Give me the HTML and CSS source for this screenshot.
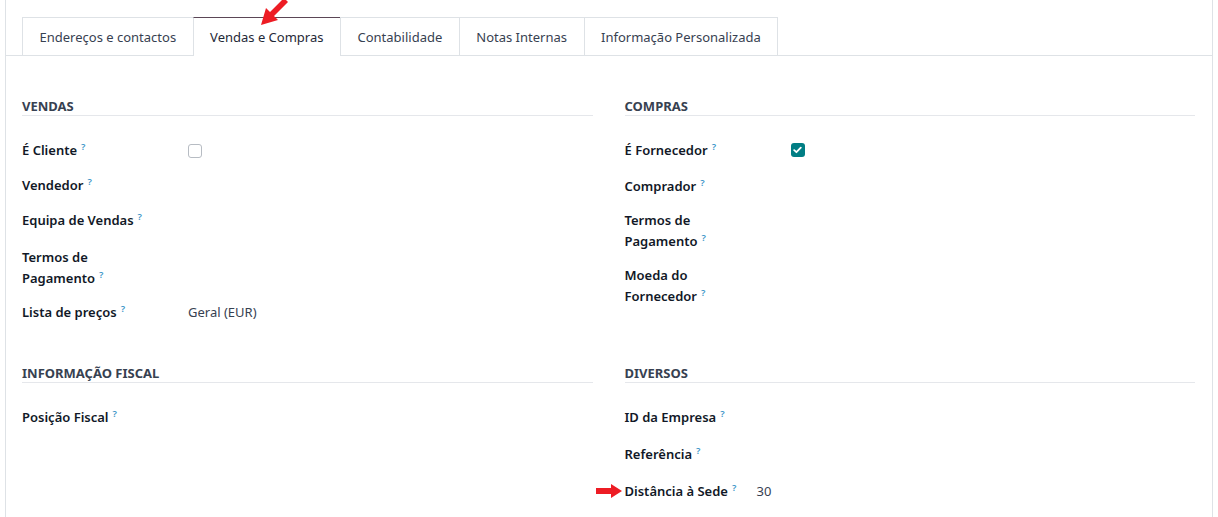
FILE: index.html
```html
<!DOCTYPE html>
<html>
  <head>
    <link rel="stylesheet" href="styles.css">
  </head>
  <body>
    <div class="sheet">
      <div class="tabs">
        <div class="tab">Endereços e contactos</div>
        <div class="tab active">Vendas e Compras</div>
        <div class="tab">Contabilidade</div>
        <div class="tab">Notas Internas</div>
        <div class="tab">Informação Personalizada</div>
      </div>
      <div class="groups">
        <div class="group sales">
          <div class="group-title">Vendas</div>
          <div class="row first"><div class="label">É Cliente<sup>?</sup></div><div class="value"><span class="checkbox"></span></div></div>
          <div class="row wide"><div class="label">Vendedor<sup>?</sup></div><div class="value"></div></div>
          <div class="row tall"><div class="label">Equipa de Vendas<sup>?</sup></div><div class="value"></div></div>
          <div class="row"><div class="label">Termos de Pagamento<sup>?</sup></div><div class="value"></div></div>
          <div class="row"><div class="label">Lista de preços<sup>?</sup></div><div class="value">Geral (EUR)</div></div>
        </div>
        <div class="group purchase">
          <div class="group-title">Compras</div>
          <div class="row first"><div class="label">É Fornecedor<sup>?</sup></div><div class="value"><span class="checkbox checked">
            <svg width="9" height="8" viewBox="0 0 9 8"><path d="M1.2 4.2 L3.4 6.2 L7.8 1.6" fill="none" stroke="#fff" stroke-width="1.8" stroke-linecap="round" stroke-linejoin="round"/></svg>
          </span></div></div>
          <div class="row"><div class="label">Comprador<sup>?</sup></div><div class="value"></div></div>
          <div class="row"><div class="label">Termos de Pagamento<sup>?</sup></div><div class="value"></div></div>
          <div class="row"><div class="label">Moeda do Fornecedor<sup>?</sup></div><div class="value"></div></div>
        </div>
        <div class="group fiscal">
          <div class="group-title">Informação Fiscal</div>
          <div class="row"><div class="label">Posição Fiscal<sup>?</sup></div><div class="value"></div></div>
        </div>
        <div class="group misc">
          <div class="group-title">Diversos</div>
          <div class="row"><div class="label">ID da Empresa<sup>?</sup></div><div class="value"></div></div>
          <div class="row"><div class="label">Referência<sup>?</sup></div><div class="value"></div></div>
          <div class="row marked">
            <svg class="arrow-right" width="26" height="14" viewBox="0 0 26 14"><path d="M0 4 H15 V0 L26 7 L15 14 V10 H0 Z" fill="#ed1c24"/></svg>
            <div class="label">Distância à Sede<sup>?</sup></div><div class="value">30</div>
          </div>
        </div>
      </div>
      <svg class="arrow-tab" width="30" height="30" viewBox="0 0 30 30"><path d="M25 1 L29 5 L15 19 L19 23 L2 28 L7 11 L11 15 Z" fill="#ed1c24"/></svg>
    </div>
  </body>
</html>
```

FILE: styles.css
```css
body {
  margin: 0;
  background: #fff;
  font-family: "Noto Sans", "Open Sans", sans-serif;
  font-size: 13px;
  color: #374151;
}
.sheet {
  position: relative;
  margin: 0 5px;
  height: 517px;
  padding-top: 17px;
  border-left: 1px solid #dee2e6;
  border-right: 1px solid #dee2e6;
  box-sizing: border-box;
}
.tabs {
  display: flex;
  padding-left: 16px;
  border-bottom: 1px solid #dee2e6;
}
.tab {
  height: 37px;
  line-height: 38px;
  padding: 0 16.5px;
  border: 1px solid #dee2e6;
  border-bottom: none;
  margin-left: -1px;
  margin-bottom: -1px;
  background: #fff;
  color: #374151;
  white-space: nowrap;
}
.tab:first-child {
  margin-left: 0;
}
.tab.active {
  border-top-color: #5b4656;
  height: 38px;
  color: #1f2937;
}
.groups {
  display: grid;
  grid-template-columns: 1fr 1fr;
  column-gap: 32px;
  row-gap: 35px;
  padding: 41px 17px 0 16px;
}
.group-title {
  font-weight: 700;
  text-transform: uppercase;
  color: #374151;
  line-height: 18px;
  border-bottom: 1px solid #e5e7eb;
  margin-bottom: 17px;
}
.row {
  position: relative;
  display: grid;
  grid-template-columns: 130px 1fr;
  column-gap: 36px;
  align-items: start;
  padding: 7px 0 6px;
}
.row.first {
  padding-bottom: 7px;
}
.purchase .row.first {
  padding-bottom: 8px;
}
.row.wide {
  padding-bottom: 7px;
}
.row.tall {
  padding-bottom: 9px;
}
.fiscal .row,
.misc .row {
  padding: 6.5px 0 9.5px;
}
.misc .row {
  grid-template-columns: 118px 1fr;
  column-gap: 14px;
}
.misc .label {
  white-space: nowrap;
}
.label {
  font-weight: 600;
  color: #111827;
  line-height: 21px;
}
.label sup {
  color: #3b95c8;
  font-size: 9.5px;
  font-weight: 600;
  margin-left: 4px;
  vertical-align: top;
  line-height: 13px;
}
.value {
  line-height: 21px;
  color: #374151;
}
.checkbox {
  display: inline-flex;
  align-items: center;
  justify-content: center;
  width: 12px;
  height: 12px;
  margin-top: 4px;
  border: 1px solid #b7bcc3;
  border-radius: 3px;
  vertical-align: top;
}
.checkbox.checked {
  width: 14px;
  height: 14px;
  margin-top: 3px;
  border: none;
  background: #017e84;
}
.arrow-tab {
  position: absolute;
  left: 253px;
  top: -3px;
}
.arrow-right {
  position: absolute;
  left: -29px;
  top: 10px;
}
```
